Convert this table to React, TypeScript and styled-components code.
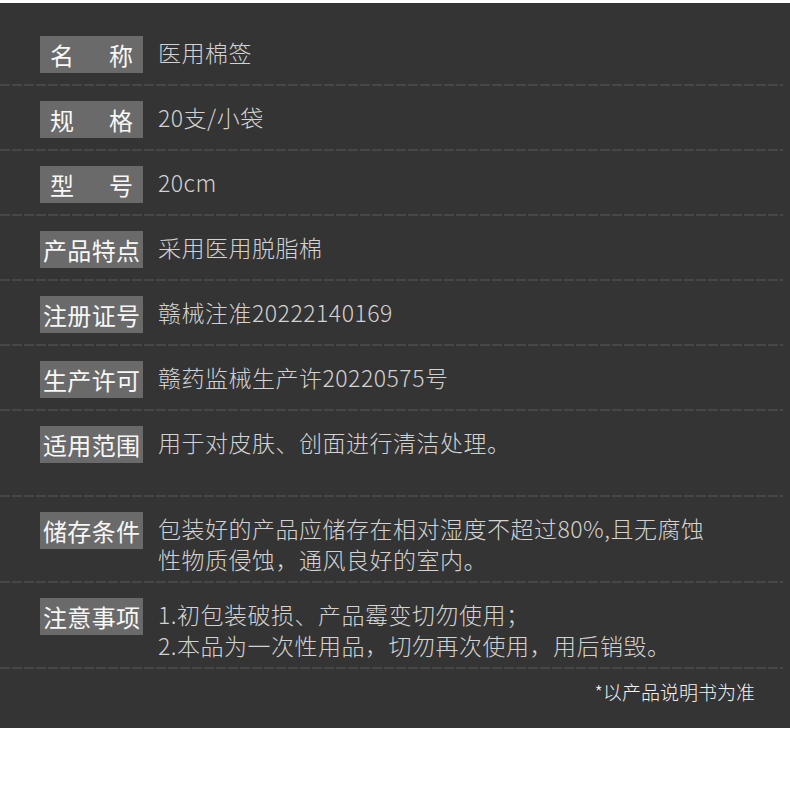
import styled, { createGlobalStyle } from "styled-components";

type Item = { label: string; lines: string[]; tall?: boolean };

const items: Item[] = [
  { label: "名称", lines: ["医用棉签"] },
  { label: "规格", lines: ["20支/小袋"] },
  { label: "型号", lines: ["20cm"] },
  { label: "产品特点", lines: ["采用医用脱脂棉"] },
  { label: "注册证号", lines: ["赣械注准20222140169"] },
  { label: "生产许可", lines: ["赣药监械生产许20220575号"] },
  { label: "适用范围", lines: ["用于对皮肤、创面进行清洁处理。"], tall: true },
  {
    label: "储存条件",
    lines: ["包装好的产品应储存在相对湿度不超过80%,且无腐蚀", "性物质侵蚀，通风良好的室内。"],
    tall: true,
  },
  {
    label: "注意事项",
    lines: ["1.初包装破损、产品霉变切勿使用；", "2.本品为一次性用品，切勿再次使用，用后销毁。"],
    tall: true,
  },
];

function App() {
  return (
    <>
      <GlobalStyle />
      <Panel>
        {items.map((item) => (
          <Row key={item.label} $tall={item.tall}>
            <Label $wide={item.label.length < 4}>{item.label}</Label>
            <Value>
              {item.lines.map((line) => (
                <div key={line}>{line}</div>
              ))}
            </Value>
          </Row>
        ))}
        <Footer>*以产品说明书为准</Footer>
      </Panel>
    </>
  );
}

const GlobalStyle = createGlobalStyle`
  body {
    margin: 0;
    background: #ffffff;
    font-family: "Noto Sans CJK SC", "Noto Sans", sans-serif;
  }
`;

const Panel = styled.section`
  margin-top: 3px;
  height: 725px;
  padding-top: 18px;
  box-sizing: border-box;
  background: #343434;
`;

const Row = styled.div<{ $tall?: boolean }>`
  display: flex;
  align-items: flex-start;
  gap: 15px;
  width: 783px;
  height: ${(p) => (p.$tall ? 86 : 65)}px;
  box-sizing: border-box;
  padding: 15px 0 0 40px;
  background: repeating-linear-gradient(
      to right,
      #474747 0 10px,
      transparent 10px 12px
    )
    left bottom / 100% 2px no-repeat;
`;

const Label = styled.div<{ $wide?: boolean }>`
  flex: none;
  width: 103px;
  height: 37px;
  box-sizing: border-box;
  padding: ${(p) => (p.$wide ? "0 10px" : "0 3px")};
  background: #6a6a6a;
  color: #f7f7f7;
  font-size: 24px;
  font-weight: 400;
  line-height: 37px;
  text-align: justify;
  text-align-last: justify;
  white-space: nowrap;
`;

const Value = styled.div`
  margin-top: 1px;
  color: #d2d2d2;
  font-size: 23px;
  font-weight: 300;
  letter-spacing: 0.5px;
  line-height: 31px;
  white-space: nowrap;
`;

const Footer = styled.div`
  padding: 10px 35px 0 0;
  text-align: right;
  color: #f2f2f2;
  font-size: 19px;
  font-weight: 300;
  line-height: 26px;
`;

export default App;
